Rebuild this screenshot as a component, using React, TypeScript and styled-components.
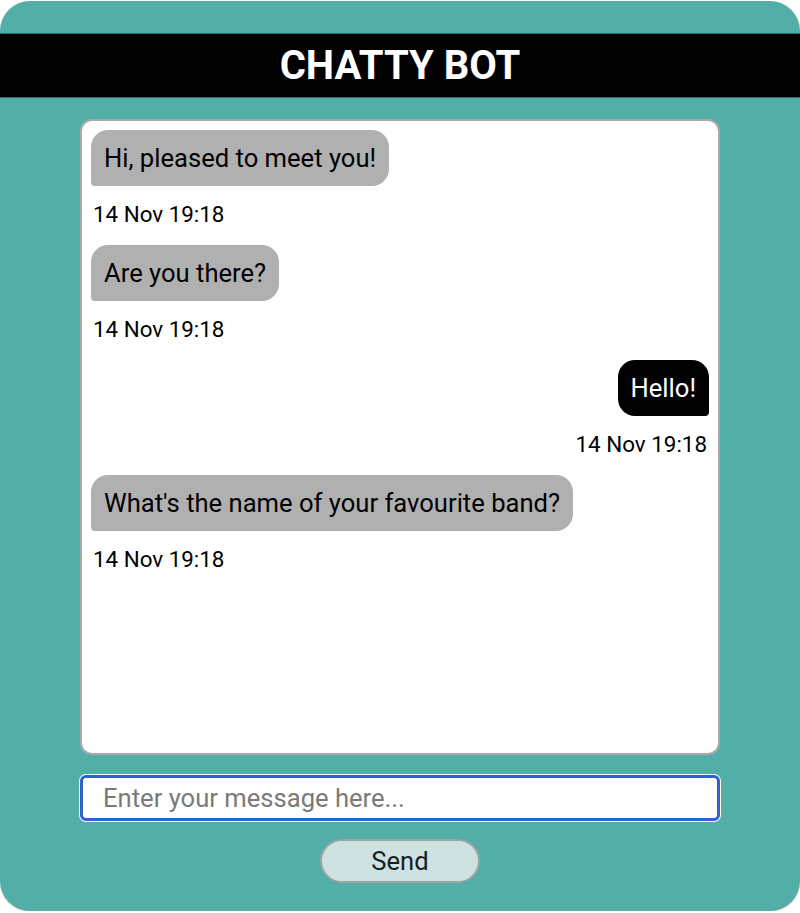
import React from 'react';
import styled, { createGlobalStyle } from 'styled-components';

const GlobalStyle = createGlobalStyle`
  html, body {
    margin: 0;
    padding: 0;
    background: #fff;
  }
  body {
    font-family: Roboto, "Liberation Sans", sans-serif;
  }
`;

type Message = { id: number; text: string; time: string; mine?: boolean };

const MESSAGES: Message[] = [
  { id: 1, text: 'Hi, pleased to meet you!', time: '14 Nov 19:18' },
  { id: 2, text: 'Are you there?', time: '14 Nov 19:18' },
  { id: 3, text: 'Hello!', time: '14 Nov 19:18', mine: true },
  { id: 4, text: "What's the name of your favourite band?", time: '14 Nov 19:18' },
];

const ChatWindowTag = styled.div`
  margin-top: 1px;
  width: 800px;
  height: 910px;
  box-sizing: border-box;
  background: #54aea8;
  border-radius: 30px;
  box-shadow: 0 1px 2px rgba(0, 0, 0, 0.15);
  padding-top: 32px;
  display: flex;
  flex-direction: column;
  align-items: center;
`;

const HeaderTag = styled.h1`
  margin: 0;
  width: 100%;
  height: 65px;
  background: #000;
  color: #fff;
  font-size: 40px;
  font-weight: 700;
  display: flex;
  align-items: center;
  justify-content: center;
  border-top: 1px solid #2f6f6a;
  border-bottom: 1px solid #2f6f6a;
  box-sizing: border-box;
`;

const MessagesTag = styled.div`
  margin-top: 21px;
  width: 640px;
  height: 636px;
  box-sizing: border-box;
  background: #fff;
  border: 2px solid #a9a9a9;
  border-radius: 12px;
  padding: 9px;
  display: flex;
  flex-direction: column;
  overflow-y: auto;
`;

const MessageTag = styled.div<{ $mine?: boolean }>`
  display: flex;
  flex-direction: column;
  align-items: ${({ $mine }) => ($mine ? 'flex-end' : 'flex-start')};
`;

const BubbleTag = styled.div<{ $mine?: boolean }>`
  background: ${({ $mine }) => ($mine ? '#000' : '#b0b0b0')};
  color: ${({ $mine }) => ($mine ? '#fff' : '#000')};
  font-size: 25.6px;
  line-height: 30px;
  padding: 13px 13px;
  border-radius: ${({ $mine }) => ($mine ? '17px 17px 4px 17px' : '17px 17px 17px 4px')};
`;

const TimeTag = styled.p`
  margin: 16px 2px 19px;
  font-size: 22.4px;
  line-height: 24px;
  color: #000;
`;

const InputTag = styled.input`
  margin-top: 20px;
  width: 640px;
  height: 46px;
  box-sizing: border-box;
  border: 3px solid #2f63c9;
  border-radius: 6px;
  box-shadow: 0 0 0 1px #fff;
  padding: 0 20px;
  font-family: Roboto, "Liberation Sans", sans-serif;
  font-size: 25.6px;
  color: #000;
  outline: none;

  &::placeholder {
    color: #7a7a7a;
  }
`;

const SendButtonTag = styled.button`
  margin-top: 18px;
  width: 160px;
  height: 44px;
  background: #cfe2e2;
  border: 2px solid #9aa6a6;
  border-radius: 22px;
  font-family: Roboto, "Liberation Sans", sans-serif;
  font-size: 25.6px;
  color: #142222;
  cursor: pointer;
`;

export default function App() {
  const [draft, setDraft] = React.useState('');

  return (
    <>
      <GlobalStyle />
      <ChatWindowTag>
        <HeaderTag>CHATTY BOT</HeaderTag>
        <MessagesTag>
          {MESSAGES.map((m) => (
            <MessageTag key={m.id} $mine={m.mine}>
              <BubbleTag $mine={m.mine}>{m.text}</BubbleTag>
              <TimeTag>{m.time}</TimeTag>
            </MessageTag>
          ))}
        </MessagesTag>
        <InputTag
          autoFocus
          placeholder="Enter your message here..."
          value={draft}
          onChange={(e) => setDraft(e.target.value)}
        />
        <SendButtonTag>Send</SendButtonTag>
      </ChatWindowTag>
    </>
  );
}
